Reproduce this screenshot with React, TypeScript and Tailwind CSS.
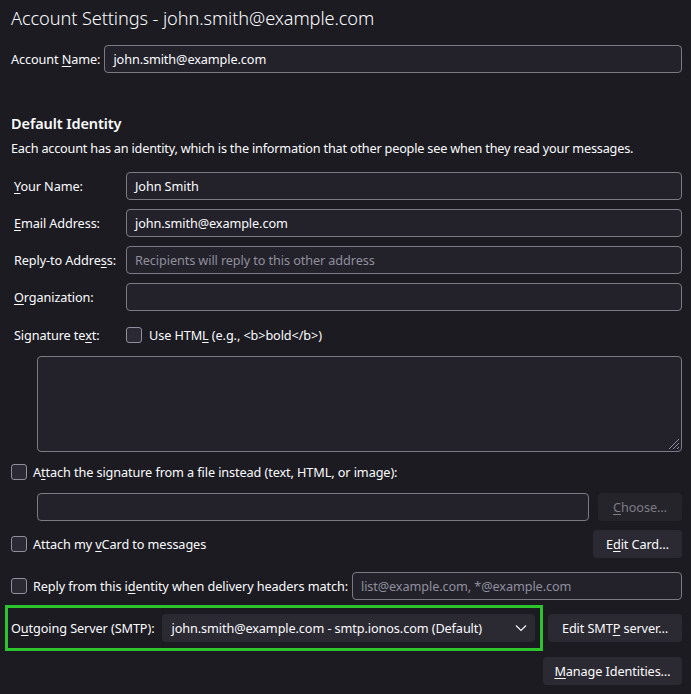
import type { ReactNode } from "react";

// access-key underline
function K({ children }: { children: ReactNode }) {
  return <u className="underline underline-offset-2">{children}</u>;
}

function TextBox({ value, placeholder, className = "" }: { value?: string; placeholder?: string; className?: string }) {
  return (
    <div
      className={`h-[28px] flex items-center px-[8px] rounded-[4px] border border-[#7b7a82] bg-[#23222b] whitespace-nowrap overflow-hidden ${className}`}
    >
      {value ? (
        <span className="text-[#fbfbfe]">{value}</span>
      ) : placeholder ? (
        <span className="text-[#8f8f9d]">{placeholder}</span>
      ) : null}
    </div>
  );
}

function Check() {
  return <div className="w-[16px] h-[16px] shrink-0 rounded-[3px] border border-[#8f8f9d] bg-[#2b2a33]" />;
}

function Button({ children, disabled = false, className = "" }: { children: ReactNode; disabled?: boolean; className?: string }) {
  return (
    <div
      className={`h-[28px] flex items-center justify-center px-[6px] rounded-[4px] whitespace-nowrap ${
        disabled ? "bg-[#25242b] text-[#7d7c84]" : "bg-[#2b2a33] text-[#fbfbfe]"
      } ${className}`}
    >
      {children}
    </div>
  );
}

function Field({ label, children }: { label: ReactNode; children: ReactNode }) {
  return (
    <div className="flex items-center">
      <div className="w-[115px] shrink-0 pl-[3px] whitespace-nowrap">{label}</div>
      <div className="flex-1">{children}</div>
    </div>
  );
}

export default function App() {
  return (
    <div
      className="w-[691px] h-[694px] overflow-hidden bg-[#1c1b22] text-[#fbfbfe] text-[12.7px] leading-[18px] tracking-[-0.1px] pl-[11px] pr-[9px] pt-[6px]"
      style={{ fontFamily: '"Noto Sans", "Open Sans", sans-serif' }}
    >
      <h1 className="text-[18.2px] leading-[24px] font-light tracking-[-0.1px]">Account Settings - john.smith@example.com</h1>

      <div className="mt-[15px] flex items-center gap-[4px]">
        <span className="whitespace-nowrap">
          Account <K>N</K>ame:
        </span>
        <TextBox value="john.smith@example.com" className="flex-1" />
      </div>

      <h2 className="mt-[40px] text-[14.5px] leading-[20px] font-semibold">Default Identity</h2>
      <p className="mt-[6px] tracking-[-0.2px] whitespace-nowrap">
        Each account has an identity, which is the information that other people see when they read your messages.
      </p>

      <div className="mt-[15px] flex flex-col gap-[9px]">
        <Field
          label={
            <>
              <K>Y</K>our Name:
            </>
          }
        >
          <TextBox value="John Smith" />
        </Field>
        <Field
          label={
            <>
              <K>E</K>mail Address:
            </>
          }
        >
          <TextBox value="john.smith@example.com" />
        </Field>
        <Field
          label={
            <>
              Reply-to Addre<K>s</K>s:
            </>
          }
        >
          <TextBox placeholder="Recipients will reply to this other address" />
        </Field>
        <Field
          label={
            <>
              <K>O</K>rganization:
            </>
          }
        >
          <TextBox />
        </Field>
      </div>

      <div className="mt-[10px] h-[28px] flex items-center">
        <div className="w-[115px] shrink-0 pl-[3px]">
          Signature te<K>x</K>t:
        </div>
        <div className="flex items-center gap-[7px]">
          <Check />
          <span>
            Use HTM<K>L</K> (e.g., &lt;b&gt;bold&lt;/b&gt;)
          </span>
        </div>
      </div>

      <div className="relative mt-[7px] ml-[26px] h-[96px] rounded-[4px] border border-[#7b7a82] bg-[#23222b]">
        <svg className="absolute right-[1px] bottom-[1px]" width="14" height="14" viewBox="0 0 14 14">
          <path d="M13 3 L3 13 M13 7 L7 13 M13 11 L11 13" stroke="#8f8f9d" strokeWidth="1" fill="none" />
        </svg>
      </div>

      <div className="mt-[10px] h-[20px] flex items-center gap-[6px]">
        <Check />
        <span>
          A<K>t</K>tach the signature from a file instead (text, HTML, or image):
        </span>
      </div>

      <div className="mt-[11px] ml-[26px] flex items-center gap-[9px]">
        <TextBox className="flex-1" />
        <Button disabled className="w-[84px]">
          <span>
            <K>C</K>hoose…
          </span>
        </Button>
      </div>

      <div className="mt-[9px] flex items-center">
        <div className="flex-1 flex items-center gap-[6px]">
          <Check />
          <span>
            Attach my <K>v</K>Card to messages
          </span>
        </div>
        <Button className="w-[89px]">
          <span>
            E<K>d</K>it Card…
          </span>
        </Button>
      </div>

      <div className="mt-[14px] flex items-center">
        <div className="flex items-center gap-[6px] whitespace-nowrap">
          <Check />
          <span>
            Reply from this i<K>d</K>entity when delivery headers match:
          </span>
        </div>
        <TextBox placeholder="list@example.com, *@example.com" className="flex-1 ml-[4px]" />
      </div>

      <div className="mt-[5px] flex items-center gap-[5px]">
        <div className="-ml-[6px] w-[538px] h-[46px] border-[3px] border-[#2ec42e] flex items-center pl-[3px] pr-[5px] whitespace-nowrap">
          <span className="shrink-0">
            O<K>u</K>tgoing Server (SMTP):
          </span>
          <div className="ml-[8px] flex-1 h-[28px] flex items-center justify-between pl-[9px] pr-[8px] rounded-[4px] bg-[#2b2a33]">
            <span>john.smith@example.com - smtp.ionos.com (Default)</span>
            <svg width="12" height="8" viewBox="0 0 12 8">
              <path d="M1 1.5 L6 6.5 L11 1.5" stroke="#fbfbfe" strokeWidth="1.1" fill="none" />
            </svg>
          </div>
        </div>
        <Button className="flex-1">
          <span>
            Edit SMT<K>P</K> server…
          </span>
        </Button>
      </div>

      <div className="mt-[6px] flex justify-end">
        <Button className="w-[139px]">
          <span>
            <K>M</K>anage Identities…
          </span>
        </Button>
      </div>
    </div>
  );
}
